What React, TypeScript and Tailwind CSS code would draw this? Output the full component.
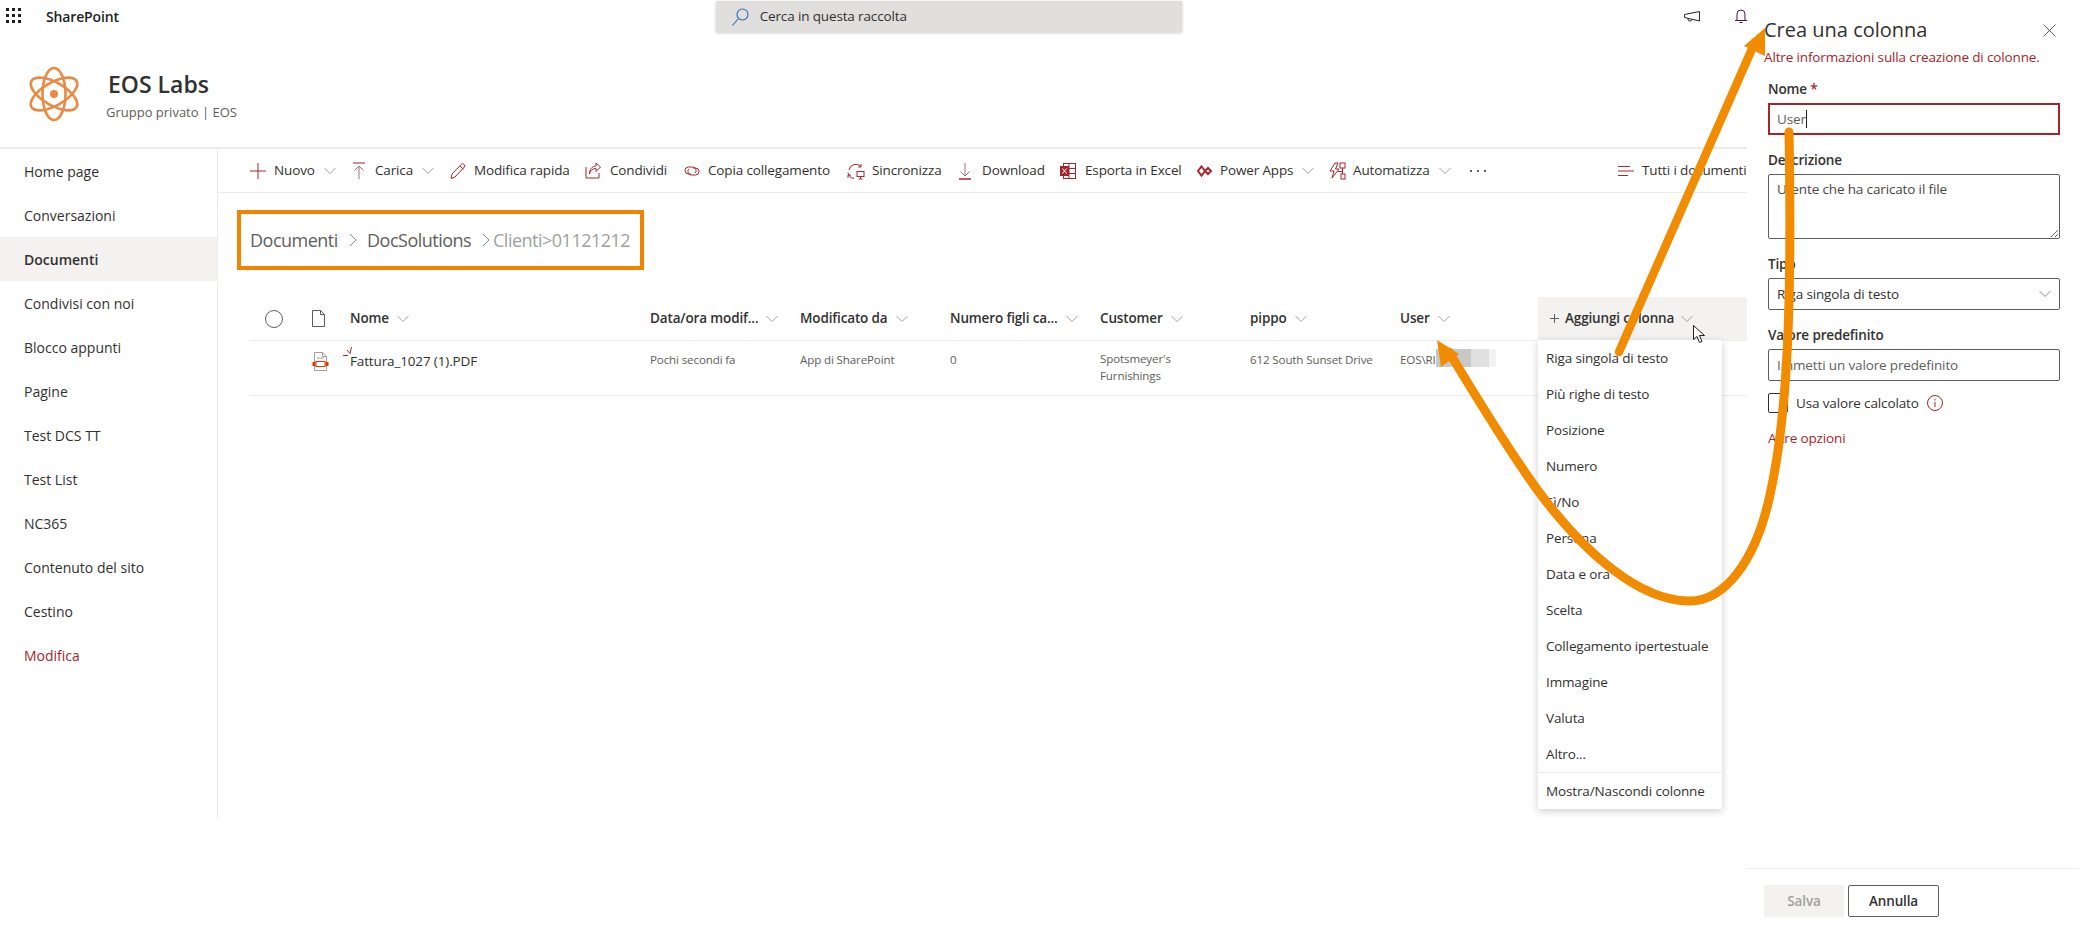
import type { ReactNode } from "react";

const RED = "#a4262c";

function Chevron({ className = "", color = "#a19f9d" }: { className?: string; color?: string }) {
  return (
    <svg width="12" height="8" viewBox="0 0 12 8" fill="none" stroke={color} strokeWidth="1" className={`shrink-0 ${className}`}>
      <path d="M0.5 1l5.5 5.5L11.5 1" />
    </svg>
  );
}

function Icon({ w = 18, children }: { w?: number; children: ReactNode }) {
  return (
    <svg width={w} height="18" viewBox={`0 0 ${w} 18`} fill="none" stroke={RED} strokeWidth="1" className="shrink-0">
      {children}
    </svg>
  );
}

// command bar: fixed slot per item, text offset from the icon as in the reference
const commands: { label: string; icon: ReactNode; caret?: boolean; slot: string; textAt: string }[] = [
  { label: "Nuovo", slot: "w-[102px]", textAt: "w-[24px]", caret: true, icon: <Icon w={16}><path d="M8 1v16M0 9h16" /></Icon> },
  { label: "Carica", slot: "w-[97px]", textAt: "w-[23px]", caret: true, icon: <Icon w={14}><path d="M1 1h12" /><path d="M7 17V4M2.5 8.5L7 4l4.5 4.5" stroke="#a0707a" /></Icon> },
  { label: "Modifica rapida", slot: "w-[136px]", textAt: "w-[25px]", icon: <Icon><path d="M2 16.5l1-4.5L12.5 2.2a1.6 1.6 0 0 1 2.3 0l.5.5a1.6 1.6 0 0 1 0 2.3L6 15l-4 1.5z" /><path d="M11 4l3.5 3.3" /></Icon> },
  { label: "Condividi", slot: "w-[99px]", textAt: "w-[25px]", icon: <Icon w={16}><path d="M1 5v11h13v-5" /><path d="M4.5 12c.5-3.5 3-5.5 6.5-5.5V9.5L15.5 5 11 1v3C7 4 4.5 7.5 4.5 12z" /></Icon> },
  { label: "Copia collegamento", slot: "w-[163px]", textAt: "w-[24px]", icon: <Icon w={16}><path d="M7 12H4.5a3.5 3.5 0 0 1 0-7H9a3.5 3.5 0 0 1 2 6" /><path d="M9 6h2.5a3.5 3.5 0 0 1 0 7H7a3.5 3.5 0 0 1-2-6" /></Icon> },
  { label: "Sincronizza", slot: "w-[112px]", textAt: "w-[25px]", icon: <Icon><path d="M2 8a7 7 0 0 1 12-3.5M14 2v3h-3" /><path d="M1 10.5a7 7 0 0 0 6 6M1 16v-3h3" /><rect x="10" y="9.5" width="7" height="5" /><path d="M13.5 14.5v2M11.5 17h4" /></Icon> },
  { label: "Download", slot: "w-[101px]", textAt: "w-[23px]", icon: <Icon w={12}><path d="M6 1v13M1.5 9.5L6 14l4.5-4.5" stroke="#a0707a" /><path d="M0 17h12" strokeWidth="1.5" /></Icon> },
  { label: "Esporta in Excel", slot: "w-[137px]", textAt: "w-[25px]", icon: <Icon w={16}><rect x="3.5" y="1.5" width="12" height="15" /><path d="M9 1.5v15M3.5 6.5h12M3.5 11.5h12" /><rect x="0.5" y="4.5" width="8" height="9" fill={RED} /><path d="M2.5 6.5l4 5M6.5 6.5l-4 5" stroke="#fff" /></Icon> },
  { label: "Power Apps", slot: "w-[132px]", textAt: "w-[23px]", caret: true, icon: <Icon w={15}><path d="M4.5 4.5L8 9l-3.5 4.5L1 9z" strokeWidth="2" /><path d="M11 6l3 3-3 3-3-3z" strokeWidth="2" /></Icon> },
  { label: "Automatizza", slot: "w-[141px]", textAt: "w-[24px]", caret: true, icon: <Icon w={17}><path d="M6 1L1 9h4l-2 7 7-9H6.5L9 1z" /><rect x="11" y="1" width="5" height="5" /><rect x="12" y="12" width="4" height="5" /><path d="M13.5 6v6M9 9.5h4.5" /></Icon> },
];

const columns: { label: string; width: string }[] = [
  { label: "Nome", width: "w-[300px]" },
  { label: "Data/ora modif...", width: "w-[150px]" },
  { label: "Modificato da", width: "w-[150px]" },
  { label: "Numero figli ca...", width: "w-[150px]" },
  { label: "Customer", width: "w-[150px]" },
  { label: "pippo", width: "w-[150px]" },
  { label: "User", width: "w-[138px]" },
];

const navItems = [
  "Home page",
  "Conversazioni",
  "Documenti",
  "Condivisi con noi",
  "Blocco appunti",
  "Pagine",
  "Test DCS TT",
  "Test List",
  "NC365",
  "Contenuto del sito",
  "Cestino",
  "Modifica",
];

const columnTypes = [
  "Riga singola di testo",
  "Più righe di testo",
  "Posizione",
  "Numero",
  "Sì/No",
  "Persona",
  "Data e ora",
  "Scelta",
  "Collegamento ipertestuale",
  "Immagine",
  "Valuta",
  "Altro...",
];

function TopBar() {
  return (
    <div className="flex h-[34px] items-start">
      <div className="ml-[6px] mt-[8px] grid w-[15px] grid-cols-3 gap-x-[3.5px] gap-y-[3.5px]">
        {Array.from({ length: 9 }).map((_, i) => (
          <span key={i} className="h-[2.5px] w-[2.5px] bg-[#201f1e]" />
        ))}
      </div>
      <div className="ml-[25px] mt-[7px] w-[79px] text-[14px] leading-[20px] font-semibold whitespace-nowrap text-[#201f1e]">SharePoint</div>
      <div className="ml-[591px] mt-[1px] flex h-[31px] w-[468px] items-center bg-[#e1dfdd] pl-[16px] shadow-[0_1px_3px_rgba(0,0,0,0.2)]">
        <svg width="17" height="18" viewBox="0 0 17 18" fill="none" stroke="#2b6cb0" strokeWidth="1.1">
          <circle cx="10.5" cy="6.5" r="5.5" />
          <path d="M6.5 10.5L0.5 17.5" />
        </svg>
        <span className="ml-[11px] text-[13.5px] text-[#323130]">Cerca in questa raccolta</span>
      </div>
      <svg width="17" height="12" viewBox="0 0 17 12" fill="none" stroke="#201f1e" className="ml-[502px] mt-[11px]">
        <path d="M0.5 3.5v3l15 3.5V0.5zM4 7.5a2 2 0 0 0 4 1" />
      </svg>
      <svg width="12" height="15" viewBox="0 0 12 15" fill="none" stroke="#201f1e" className="ml-[34px] mt-[9px]">
        <path d="M2 11V5a4 4 0 0 1 8 0v6M0 11.5h12" stroke="#4b0f5c" />
        <path d="M4.5 13.5h3" />
      </svg>
    </div>
  );
}

function SiteHeader() {
  return (
    <div className="flex h-[115px] border-b-2 border-[#edebe9]">
      <svg width="50" height="56" viewBox="0 0 50 56" fill="none" stroke="#e98a45" strokeWidth="2.6" className="ml-[29px] mt-[32px]">
        <ellipse cx="25" cy="28" rx="11.5" ry="26" />
        <ellipse cx="25" cy="28" rx="11.5" ry="26" transform="rotate(60 25 28)" />
        <ellipse cx="25" cy="28" rx="11.5" ry="26" transform="rotate(-60 25 28)" />
        <circle cx="25" cy="28" r="4" fill="#e98a45" stroke="none" />
      </svg>
      <div className="ml-[27px]">
        <div className="ml-[2px] mt-[31px] text-[23px] leading-[38px] font-semibold tracking-normal text-[#323130]">EOS Labs</div>
        <div className="-mt-[1px] text-[13px] leading-[20px] tracking-normal text-[#605e5c]">Gruppo privato | EOS</div>
      </div>
    </div>
  );
}

function SideNav() {
  return (
    <nav className="h-[669px] w-[218px] shrink-0 border-r border-[#edebe9]">
      {navItems.map((item) => (
        <div
          key={item}
          className={`flex h-[44px] items-center pl-[24px] text-[14px] tracking-normal ${
            item === "Documenti"
              ? "bg-[#f3f2f1] font-semibold text-[#323130]"
              : item === "Modifica"
                ? "text-[#a4262c]"
                : "text-[#323130]"
          }`}
        >
          {item}
        </div>
      ))}
    </nav>
  );
}

function CommandBar() {
  return (
    <div className="flex h-[44px] items-center overflow-hidden border-b border-[#edebe9] pl-[32px] text-[13.5px] text-[#323130]">
      {commands.map((c) => (
        <div key={c.label} className={`flex shrink-0 items-center ${c.slot}`}>
          <span className={`shrink-0 ${c.textAt}`}>{c.icon}</span>
          <span className="whitespace-nowrap">{c.label}</span>
          {c.caret && <Chevron className="ml-[9px]" />}
        </div>
      ))}
      <span className="flex shrink-0 gap-[5px]">
        <i className="h-[2px] w-[2px] bg-[#605e5c]" />
        <i className="h-[2px] w-[2px] bg-[#605e5c]" />
        <i className="h-[2px] w-[2px] bg-[#605e5c]" />
      </span>
      <svg width="16" height="12" viewBox="0 0 16 12" stroke={RED} className="ml-[132px] shrink-0">
        <path d="M0 1.5h12M0 6h16M0 10.5h10" />
      </svg>
      <span className="ml-[8px] shrink-0 whitespace-nowrap">Tutti i documenti</span>
    </div>
  );
}

function Breadcrumb() {
  return (
    <div className="ml-[19px] mt-[17px] flex h-[60px] w-[407px] items-center border-4 border-[#f08300] pl-[9px] text-[18px] tracking-[-0.5px] text-[#605e5c]">
      <span className="w-[87px] shrink-0 whitespace-nowrap">Documenti</span>
      <svg width="8" height="14" viewBox="0 0 8 14" fill="none" stroke="#8a8886" className="ml-[12px] shrink-0">
        <path d="M1 1l6 6-6 6" />
      </svg>
      <span className="ml-[10px] w-[104px] shrink-0 whitespace-nowrap">DocSolutions</span>
      <svg width="8" height="14" viewBox="0 0 8 14" fill="none" stroke="#8a8886" className="ml-[11px] shrink-0">
        <path d="M1 1l6 6-6 6" />
      </svg>
      <span className="ml-[3px] whitespace-nowrap text-[#a19f9d]">Clienti&gt;01121212</span>
    </div>
  );
}

function AddColumnMenu() {
  return (
    <div className="absolute top-full left-0 z-10 w-[184px] bg-white font-normal shadow-[0_2px_8px_rgba(0,0,0,0.2)]">
      {columnTypes.map((t) => (
        <div key={t} className="flex h-[36px] items-center pl-[8px] text-[13.5px] whitespace-nowrap text-[#323130]">
          {t}
        </div>
      ))}
      <div className="h-[37px] border-t border-[#edebe9] pl-[8px] pt-[8px] text-[13.5px] whitespace-nowrap text-[#323130]">
        Mostra/Nascondi colonne
      </div>
    </div>
  );
}

function Table() {
  return (
    <div className="ml-[32px] mt-[27px]">
      <div className="flex h-[44px] border-b border-[#edebe9] text-[13.5px] font-semibold text-[#323130]">
        <div className="w-[15px]" />
        <div className="mt-[13px] h-[18px] w-[18px] rounded-full border border-[#605e5c]" />
        <svg width="15" height="17" viewBox="0 0 15 17" fill="none" stroke="#605e5c" className="ml-[28px] mt-[13px]">
          <path d="M1.5 0.5h8l4 4v12h-12zM9.5 0.5v4h4" />
        </svg>
        <div className="w-[24px]" />
        {columns.map((col) => (
          <div key={col.label} className={`flex h-[43px] items-center gap-[8px] ${col.width}`}>
            <span className="whitespace-nowrap">{col.label}</span>
            <Chevron />
          </div>
        ))}
        <div className="relative flex h-[43px] w-[209px] items-center bg-[#f3f2f1] pl-[12px]">
          <svg width="9" height="9" viewBox="0 0 9 9" stroke="#605e5c"><path d="M4.5 0v9M0 4.5h9" /></svg>
          <span className="ml-[6px] whitespace-nowrap">Aggiungi colonna</span>
          <Chevron className="ml-[7px]" />
          <AddColumnMenu />
        </div>
      </div>
      <div className="flex h-[55px] border-b border-[#edebe9] text-[11.6px] text-[#605e5c]">
        <div className="w-[62px]" />
        <svg width="17" height="19" viewBox="0 0 17 19" fill="none" className="mt-[11px]">
          <path d="M2.5 0.5h8l4 4v14h-12zM10.5 0.5v4h4M5 6h7" stroke="#a19f9d" />
          <rect x="4" y="9.5" width="9" height="5" stroke="#d83b01" />
          <rect x="0.5" y="10" width="3" height="4" fill="#d83b01" />
          <rect x="13.5" y="10" width="3" height="4" fill="#d83b01" />
        </svg>
        <div className="w-[21px]" />
        <div className="relative flex w-[300px] items-start pt-[10px] text-[13.5px] text-[#323130]">
          <svg width="10" height="9" viewBox="0 0 10 9" fill="none" stroke={RED} className="absolute -left-[7px] top-[6px]">
            <path d="M0 8.5h5M4 3l3 3.5L8.5 0" />
          </svg>
          Fattura_1027 (1).PDF
        </div>
        <div className="w-[150px] pt-[10px]">Pochi secondi fa</div>
        <div className="w-[150px] pt-[10px]">App di SharePoint</div>
        <div className="w-[150px] pt-[10px]">0</div>
        <div className="w-[150px] pt-[9px] leading-[17px]">
          Spotsmeyer's
          <br />
          Furnishings
        </div>
        <div className="w-[150px] pt-[10px] whitespace-nowrap">612 South Sunset Drive</div>
        <div className="flex w-[138px] items-start pt-[10px]">
          <span>EOS\RI</span>
          {/* the blurred-out user name */}
          <span className="-mt-[2px] flex h-[18px]">
            <i className="w-[35px] bg-[#c8c8c8]" />
            <i className="w-[18px] bg-[#e0e0e0]" />
            <i className="w-[7px] bg-[#f3f3f3]" />
          </span>
        </div>
      </div>
    </div>
  );
}

function Label({ children }: { children: ReactNode }) {
  return <div className="mt-[15px] h-[20px] text-[13.5px] leading-[20px] font-semibold text-[#323130]">{children}</div>;
}

function CreateColumnPanel() {
  return (
    <aside className="flex h-[926px] w-[332px] shrink-0 flex-col bg-white">
      <div className="mt-[16px] flex h-[28px] items-center pl-[17px] pr-[23px]">
        <span className="text-[20px] tracking-normal text-[#323130]">Crea una colonna</span>
        <svg width="13" height="13" viewBox="0 0 13 13" stroke="#605e5c" className="ml-auto">
          <path d="M0.5 0.5l12 12M12.5 0.5l-12 12" />
        </svg>
      </div>
      <div className="ml-[17px] mt-[3px] h-[20px] text-[13.5px] leading-[20px] whitespace-nowrap text-[#a4262c]">
        Altre informazioni sulla creazione di colonne.
      </div>
      <div className="ml-[21px] w-[292px]">
        <div className="mt-[12px] h-[20px] text-[13.5px] leading-[20px] font-semibold text-[#323130]">
          Nome <span className="text-[#a4262c]">*</span>
        </div>
        <div className="mt-[4px] flex h-[32px] items-center border-2 border-[#a4262c] pl-[7px] text-[13.5px] text-[#605e5c]">
          User
          <span className="h-[18px] w-px bg-[#201f1e]" />
        </div>
        <Label>Descrizione</Label>
        <textarea
          readOnly
          value="Utente che ha caricato il file"
          className="mt-[4px] block h-[65px] w-full rounded-[2px] border border-[#605e5c] px-[8px] py-[4px] text-[13.5px] text-[#484644]"
        />
        <Label>Tipo</Label>
        <div className="mt-[4px] flex h-[32px] items-center justify-between rounded-[2px] border border-[#605e5c] pl-[8px] pr-[8px] text-[13.5px] text-[#323130]">
          Riga singola di testo
          <Chevron color="#8a8886" />
        </div>
        <Label>Valore predefinito</Label>
        <div className="mt-[4px] flex h-[32px] items-center rounded-[2px] border border-[#605e5c] pl-[8px] text-[13.5px] text-[#605e5c]">
          Immetti un valore predefinito
        </div>
        <div className="mt-[12px] flex h-[20px] items-center text-[13.5px] text-[#323130]">
          <div className="h-[20px] w-[20px] rounded-[2px] border border-[#323130]" />
          <span className="ml-[8px]">Usa valore calcolato</span>
          <svg width="16" height="16" viewBox="0 0 16 16" fill="none" stroke={RED} className="ml-[8px]">
            <circle cx="8" cy="8" r="7.5" />
            <path d="M8 7v5M8 4v1.5" />
          </svg>
        </div>
        <div className="mt-[15px] h-[20px] text-[13.5px] leading-[20px] text-[#a4262c]">Altre opzioni</div>
      </div>
      <div className="mt-auto mb-[9px] flex gap-[4px] border-t border-[#edebe9] pl-[17px] pt-[16px]">
        <div className="flex h-[32px] w-[80px] items-center justify-center rounded-[2px] bg-[#f3f2f1] text-[13.5px] font-semibold text-[#a19f9d]">
          Salva
        </div>
        <div className="flex h-[32px] w-[91px] items-center justify-center rounded-[2px] border border-[#605e5c] text-[13.5px] font-semibold text-[#323130]">
          Annulla
        </div>
      </div>
    </aside>
  );
}

// the two orange arrows and the mouse pointer painted over the screenshot
function Annotations() {
  return (
    <svg width="2079" height="926" viewBox="0 0 2079 926" fill="none" className="pointer-events-none absolute inset-0 z-20">
      <path d="M1619 352L1755 42" stroke="#f18b00" strokeWidth="8.5" strokeLinecap="round" />
      <path d="M1765 28L1744 46L1765 56z" fill="#f18b00" />
      <path
        d="M1789 132C1792 300 1788 410 1771 490C1757 560 1725 602 1688 601C1640 600 1585 555 1536 488C1505 445 1475 395 1449 352"
        stroke="#f18b00"
        strokeWidth="9"
        strokeLinecap="round"
      />
      <path d="M1437 340L1441 367L1459 354z" fill="#f18b00" />
      <path d="M1693.5 325.5v14l3.5-3 2.5 6 2.5-1-2.5-6h5z" fill="#fff" stroke="#201f1e" />
    </svg>
  );
}

export default function App() {
  return (
    <div className="relative flex h-[926px] w-[2079px] overflow-hidden bg-white font-['Open_Sans',sans-serif] tracking-[-0.14px]">
      <div className="w-[1747px] shrink-0">
        <TopBar />
        <SiteHeader />
        <div className="flex">
          <SideNav />
          <main className="min-w-0 flex-1">
            <CommandBar />
            <Breadcrumb />
            <Table />
          </main>
        </div>
      </div>
      <CreateColumnPanel />
      <Annotations />
    </div>
  );
}
